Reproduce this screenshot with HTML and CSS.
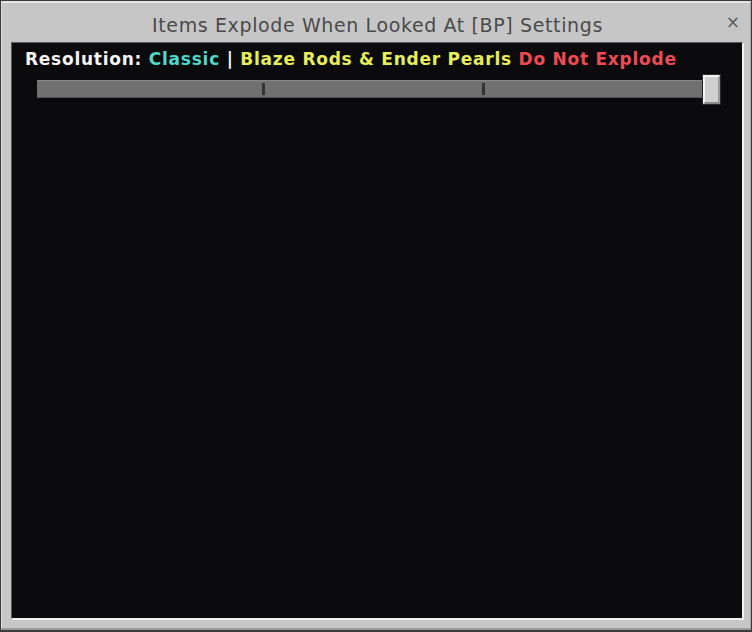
FILE: index.html
```html
<!DOCTYPE html>
<html>
<head>
<meta charset="utf-8">
<link rel="stylesheet" href="styles.css">
</head>
<body>
<div class="dialog">
  <div class="header">
    <div class="title">Items Explode When Looked At [BP] Settings</div>
    <div class="close">×</div>
  </div>
  <div class="content">
    <div class="label"><span class="w">Resolution:</span> <span class="c">Classic</span> <span class="w">|</span> <span class="y">Blaze Rods &amp; Ender Pearls</span> <span class="r">Do Not Explode</span></div>
    <div class="slider">
      <div class="track">
        <div class="tick"></div>
        <div class="tick"></div>
      </div>
      <div class="thumb"></div>
    </div>
  </div>
</div>
</body>
</html>
```
FILE: styles.css
```css
html, body {
  margin: 0;
  padding: 0;
  width: 752px;
  height: 632px;
  overflow: hidden;
  background: #3a3a3a;
}
.dialog {
  box-sizing: border-box;
  width: 750px;
  height: 629px;
  margin-left: 1px;
  margin-top: 1px;
  background: #c6c6c6;
  border-top: 2px solid #e4e4e4;
  border-left: 1px solid #dedede;
  border-right: 1px solid #a8a8a8;
  border-bottom: 2px solid #9a9a9a;
  display: flex;
  flex-direction: column;
  padding: 0 6px 8px 9px;
}
.header {
  height: 39px;
  flex: none;
  display: flex;
  align-items: center;
  justify-content: center;
  position: relative;
}
.title {
  font-family: "DejaVu Sans", sans-serif;
  font-size: 19px;
  color: #4a4a4a;
  letter-spacing: 0.62px;
  padding-top: 4px;
}
.close {
  position: absolute;
  right: 4px;
  top: 9px;
  font-family: "DejaVu Sans", sans-serif;
  font-size: 17px;
  color: #5a5a5a;
}
.content {
  flex: 1;
  background: #0b0a0d;
  border-top: 1px solid #5c5c5c;
  border-left: 1px solid #5c5c5c;
  border-right: 2px solid #f2f2f2;
  border-bottom: 2px solid #f2f2f2;
  padding: 5px 0 0 13px;
}
.label {
  font-family: "DejaVu Sans", sans-serif;
  font-weight: bold;
  font-size: 17px;
  line-height: 22px;
  white-space: nowrap;
  letter-spacing: 0.75px;
}
.w { color: #f4f4f4; }
.c { color: #4fd8c8; }
.y { color: #e6ee5a; }
.r { color: #ef4b55; }
.slider {
  display: flex;
  align-items: center;
  margin-top: 4px;
  margin-left: 12px;
  width: 683px;
  height: 30px;
}
.track {
  flex: 1;
  height: 16px;
  background: #707070;
  border-top: 1px solid #888;
  border-bottom: 1px solid #555;
  display: flex;
  justify-content: space-evenly;
  align-items: center;
  padding: 0 0 0 7px;
}
.tick {
  width: 3px;
  height: 12px;
  background: #333;
}
.thumb {
  box-sizing: border-box;
  width: 17px;
  height: 29px;
  background: #cfcfcf;
  border-top: 2px solid #f4f4f4;
  border-left: 2px solid #f4f4f4;
  border-right: 2px solid #9a9a9a;
  border-bottom: 2px solid #8a8a8a;
  outline: 1px solid #2a2a2a;
}
```
